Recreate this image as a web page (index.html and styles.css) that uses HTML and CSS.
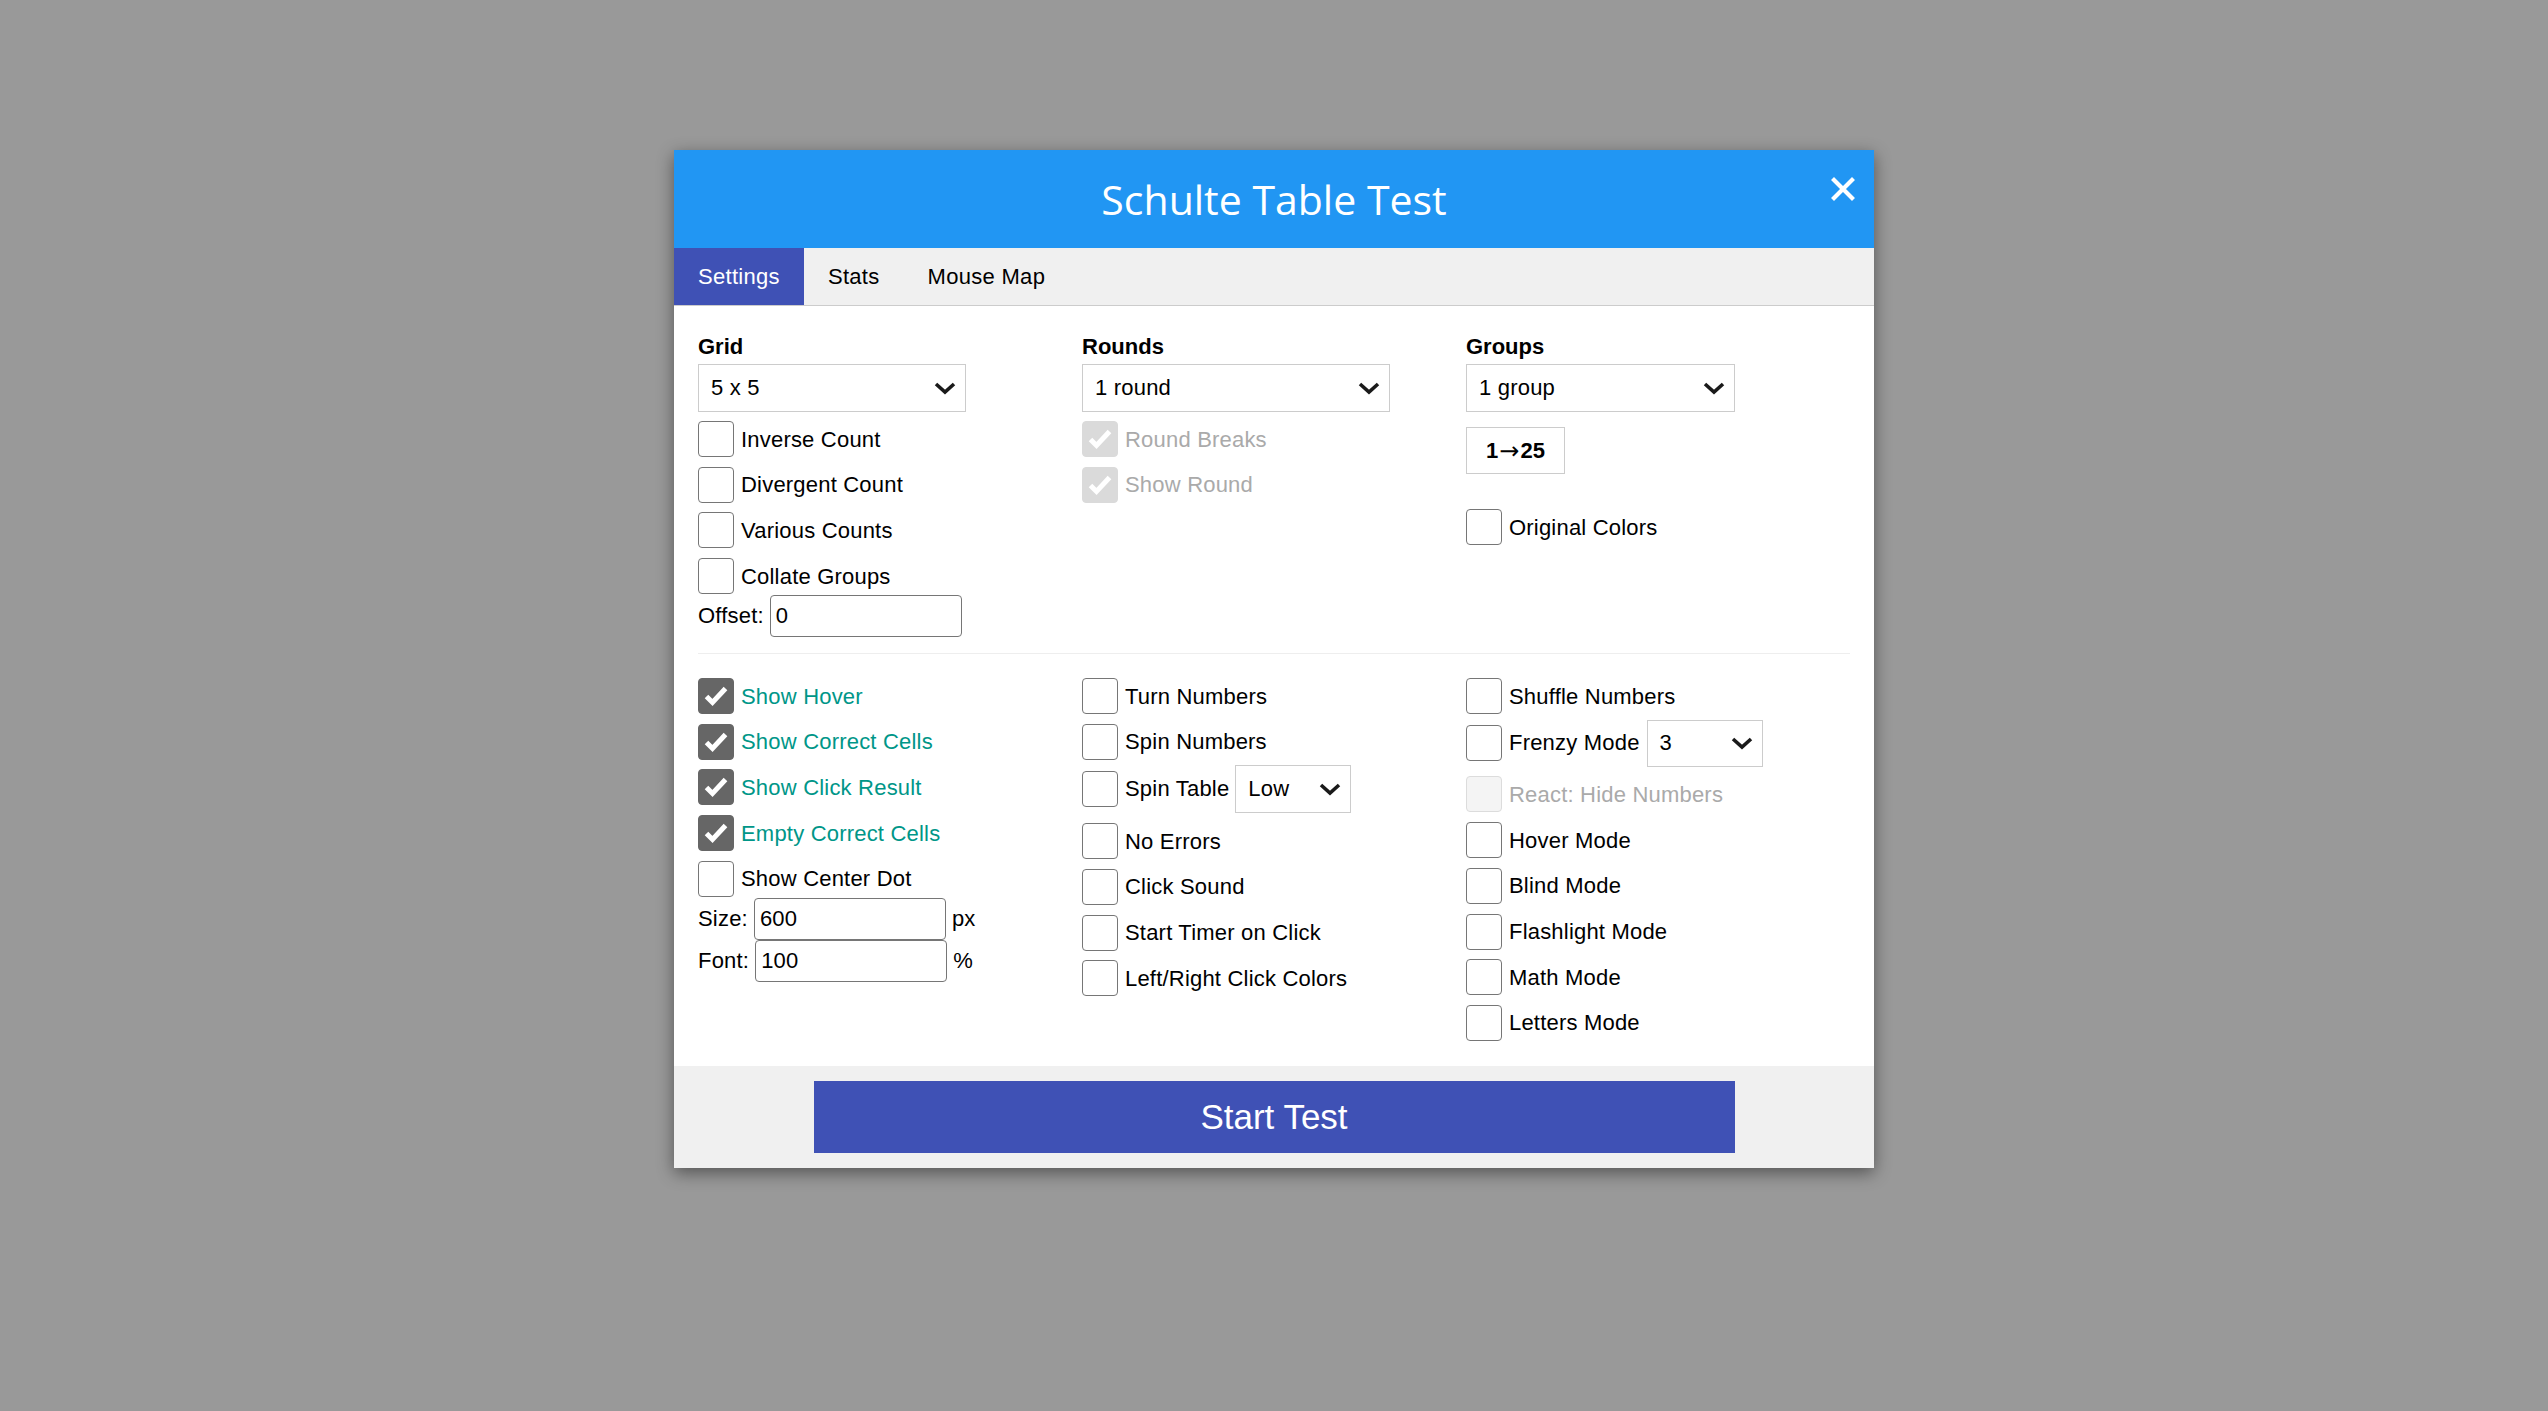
FILE: index.html
```html
<!DOCTYPE html>
<html lang="en">
<head>
<meta charset="utf-8">
<title>Schulte Table Test</title>
<link rel="stylesheet" href="styles.css">
</head>
<body>
<div class="page">
  <div class="modal">
    <div class="header">
      <h1 class="title">Schulte Table Test</h1>
      <div class="close">
        <svg viewBox="0 0 24 24" width="24" height="24"><path d="M3 3 L21 21 M21 3 L3 21" stroke="#fff" stroke-width="4.2" stroke-linecap="square" fill="none"/></svg>
      </div>
    </div>
    <div class="tabs">
      <div class="tab active">Settings</div>
      <div class="tab">Stats</div>
      <div class="tab">Mouse Map</div>
    </div>
    <div class="body">
      <div class="grid">
        <div class="col">
          <div class="label">Grid</div>
          <div class="select w-grid"><span>5 x 5</span><svg class="chev" viewBox="0 0 24 14" width="24" height="14"><path d="M3 3 L12 11 L21 3" stroke="#1a1a1a" stroke-width="3.6" fill="none"/></svg></div>
          <div class="list first">
            <div class="row"><span class="cb"></span>Inverse Count</div>
            <div class="row"><span class="cb"></span>Divergent Count</div>
            <div class="row"><span class="cb"></span>Various Counts</div>
            <div class="row"><span class="cb"></span>Collate Groups</div>
          </div>
          <div class="field offset">Offset:<span class="input">0</span></div>
        </div>
        <div class="col">
          <div class="label">Rounds</div>
          <div class="select w-rounds"><span>1 round</span><svg class="chev" viewBox="0 0 24 14" width="24" height="14"><path d="M3 3 L12 11 L21 3" stroke="#1a1a1a" stroke-width="3.6" fill="none"/></svg></div>
          <div class="list first">
            <div class="row disabled"><span class="cb dis-checked"><svg viewBox="0 0 36 36" width="36" height="36"><path d="M8.5 18.5 L14.5 24.5 L27.5 10.5" stroke="#fff" stroke-width="5" fill="none"/></svg></span>Round Breaks</div>
            <div class="row disabled"><span class="cb dis-checked"><svg viewBox="0 0 36 36" width="36" height="36"><path d="M8.5 18.5 L14.5 24.5 L27.5 10.5" stroke="#fff" stroke-width="5" fill="none"/></svg></span>Show Round</div>
          </div>
        </div>
        <div class="col">
          <div class="label">Groups</div>
          <div class="select w-groups"><span>1 group</span><svg class="chev" viewBox="0 0 24 14" width="24" height="14"><path d="M3 3 L12 11 L21 3" stroke="#1a1a1a" stroke-width="3.6" fill="none"/></svg></div>
          <div class="order">1<span class="arrow">→</span>25</div>
          <div class="row orig"><span class="cb"></span>Original Colors</div>
        </div>
      </div>

      <div class="divider"></div>

      <div class="grid">
        <div class="col">
          <div class="list">
            <div class="row on"><span class="cb checked"><svg viewBox="0 0 36 36" width="36" height="36"><path d="M8.5 18.5 L14.5 24.5 L27.5 10.5" stroke="#fff" stroke-width="5" fill="none"/></svg></span>Show Hover</div>
            <div class="row on"><span class="cb checked"><svg viewBox="0 0 36 36" width="36" height="36"><path d="M8.5 18.5 L14.5 24.5 L27.5 10.5" stroke="#fff" stroke-width="5" fill="none"/></svg></span>Show Correct Cells</div>
            <div class="row on"><span class="cb checked"><svg viewBox="0 0 36 36" width="36" height="36"><path d="M8.5 18.5 L14.5 24.5 L27.5 10.5" stroke="#fff" stroke-width="5" fill="none"/></svg></span>Show Click Result</div>
            <div class="row on"><span class="cb checked"><svg viewBox="0 0 36 36" width="36" height="36"><path d="M8.5 18.5 L14.5 24.5 L27.5 10.5" stroke="#fff" stroke-width="5" fill="none"/></svg></span>Empty Correct Cells</div>
            <div class="row"><span class="cb"></span>Show Center Dot</div>
          </div>
          <div class="field size">Size:<span class="input">600</span><span class="unit">px</span></div>
          <div class="field font">Font:<span class="input">100</span><span class="unit">%</span></div>
        </div>
        <div class="col">
          <div class="list">
            <div class="row"><span class="cb"></span>Turn Numbers</div>
            <div class="row"><span class="cb"></span>Spin Numbers</div>
            <div class="row has-select"><span class="cb"></span>Spin Table<span class="select small"><span>Low</span><svg class="chev" viewBox="0 0 24 14" width="24" height="14"><path d="M3 3 L12 11 L21 3" stroke="#1a1a1a" stroke-width="3.6" fill="none"/></svg></span></div>
            <div class="row"><span class="cb"></span>No Errors</div>
            <div class="row"><span class="cb"></span>Click Sound</div>
            <div class="row"><span class="cb"></span>Start Timer on Click</div>
            <div class="row"><span class="cb"></span>Left/Right Click Colors</div>
          </div>
        </div>
        <div class="col">
          <div class="list">
            <div class="row"><span class="cb"></span>Shuffle Numbers</div>
            <div class="row has-select short"><span class="cb"></span>Frenzy Mode<span class="select small frenzy"><span>3</span><svg class="chev" viewBox="0 0 24 14" width="24" height="14"><path d="M3 3 L12 11 L21 3" stroke="#1a1a1a" stroke-width="3.6" fill="none"/></svg></span></div>
            <div class="row disabled"><span class="cb dis"></span>React: Hide Numbers</div>
            <div class="row"><span class="cb"></span>Hover Mode</div>
            <div class="row"><span class="cb"></span>Blind Mode</div>
            <div class="row"><span class="cb"></span>Flashlight Mode</div>
            <div class="row"><span class="cb"></span>Math Mode</div>
            <div class="row"><span class="cb"></span>Letters Mode</div>
          </div>
        </div>
      </div>
    </div>
    <div class="footer">
      <div class="start">Start Test</div>
    </div>
  </div>
</div>
</body>
</html>
```

FILE: styles.css
```css
html, body {
  margin: 0;
  padding: 0;
}

body {
  background: #999999;
  font-family: "Liberation Sans", Arial, sans-serif;
  color: #000;
  height: 1411px;
  overflow: hidden;
}

.page {
  padding-top: 150px;
}

.modal {
  width: 1200px;
  margin: 0 auto;
  background: #fff;
  box-shadow: 0 5px 16px rgba(0, 0, 0, 0.45);
}

.header {
  position: relative;
  height: 98px;
  background: #2196f3;
  display: flex;
  align-items: center;
  justify-content: center;
}

.title {
  margin: 0;
  font-family: "Open Sans", "Noto Sans", sans-serif;
  font-weight: 400;
  font-size: 41px;
  color: #fff;
  line-height: 1;
}

.close {
  position: absolute;
  top: 27px;
  right: 19px;
  width: 24px;
  height: 24px;
}

.close svg {
  display: block;
}

.tabs {
  display: flex;
  height: 57px;
  background: #f0f0f0;
  border-bottom: 1px solid #cccccc;
}

.tab {
  display: flex;
  align-items: center;
  padding: 0 24px;
  font-size: 22px;
  letter-spacing: 0.3px;
  color: #000;
}

.tab.active {
  background: #3f51b5;
  color: #fff;
}

.body {
  padding: 28px 24px 25px;
}

.grid {
  display: grid;
  grid-template-columns: repeat(3, 1fr);
}

.col {
  display: flex;
  flex-direction: column;
  align-items: flex-start;
}

.label {
  font-weight: bold;
  font-size: 22px;
  line-height: 26px;
  margin-bottom: 4px;
}

.select {
  display: flex;
  align-items: center;
  justify-content: space-between;
  box-sizing: border-box;
  height: 48px;
  border: 1px solid #cccccc;
  background: #fff;
  padding: 0 8px 0 12px;
  font-size: 22px;
  letter-spacing: 0.2px;
  color: #000;
}

.chev {
  display: block;
  flex: none;
}

.w-grid {
  width: 268px;
}

.w-rounds {
  width: 308px;
}

.w-groups {
  width: 269px;
}

.select.small {
  width: 116px;
  margin-left: 6px;
}

.select.frenzy {
  height: 47px;
  margin-left: 7px;
}

.list {
  display: flex;
  flex-direction: column;
  gap: 9.7px;
}

.list.first {
  margin-top: 9px;
}

.row {
  display: flex;
  align-items: center;
  height: 36px;
  font-size: 22px;
  letter-spacing: 0.2px;
  white-space: nowrap;
  padding-top: 1px;
  box-sizing: border-box;
}

.row.has-select {
  height: 48px;
  margin-top: -4px;
  padding-top: 0;
}

.row.has-select.short {
  height: 47px;
}

.row.on {
  color: #009688;
}

.row.disabled {
  color: #aaaaaa;
}

.cb {
  flex: none;
  box-sizing: border-box;
  width: 36px;
  height: 36px;
  border: 1px solid #767676;
  border-radius: 4px;
  margin-right: 7px;
  margin-top: -1px;
  background: #fff;
  position: relative;
  overflow: hidden;
}

.row.has-select .cb {
  margin-top: 0;
}

.cb svg {
  display: block;
  position: absolute;
  left: -1px;
  top: -1px;
}

.cb.checked {
  background: #666666;
  border-color: #666666;
}

.cb.dis-checked {
  background: #dadada;
  border-color: #dadada;
}

.cb.dis {
  background: #f4f4f4;
  border-color: #dcdcdc;
}

.field {
  display: flex;
  align-items: center;
  font-size: 22px;
  letter-spacing: 0.2px;
  height: 42px;
  white-space: nowrap;
}

.field.offset {
  margin-top: 1px;
}

.field.size {
  margin-top: 1px;
}

.field.font {
  margin-top: 0;
}

.input {
  box-sizing: border-box;
  width: 192px;
  height: 42px;
  margin-left: 6px;
  border: 1px solid #767676;
  border-radius: 4px;
  padding-left: 5px;
  display: flex;
  align-items: center;
  font-size: 22px;
  background: #fff;
}

.unit {
  margin-left: 6px;
}

.order {
  box-sizing: border-box;
  margin-top: 15px;
  width: 99px;
  height: 47px;
  border: 1px solid #cccccc;
  display: flex;
  align-items: center;
  justify-content: center;
  font-weight: bold;
  font-size: 22px;
}

.arrow {
  font-family: "DejaVu Sans", sans-serif;
  font-weight: normal;
  font-size: 24px;
  margin: 0 1px;
}

.row.orig {
  margin-top: 35px;
}

.divider {
  height: 1px;
  background: #eeeeee;
  margin: 16px 0 24px;
}

.footer {
  background: #f0f0f0;
  padding: 15px 0;
}

.start {
  width: 921px;
  height: 72px;
  margin: 0 auto;
  background: #3f51b5;
  color: #fff;
  font-size: 35px;
  display: flex;
  align-items: center;
  justify-content: center;
}
```
